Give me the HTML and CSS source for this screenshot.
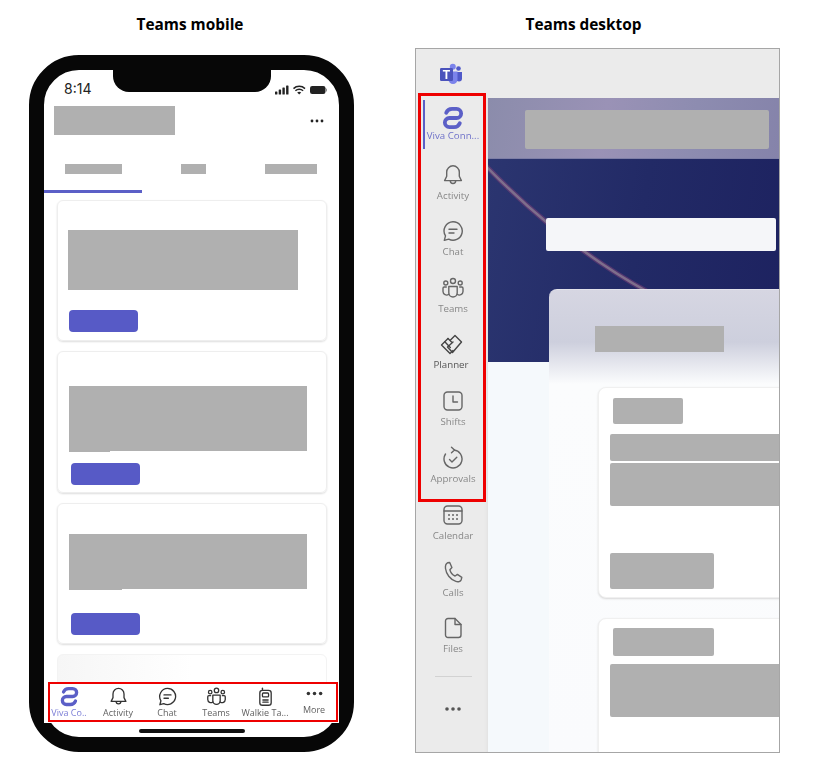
FILE: index.html
```html
<!DOCTYPE html>
<html lang="en">
<head>
    <meta charset="UTF-8">
    <meta name="viewport" content="width=device-width, initial-scale=1.0">
    <title>Teams mobile and Teams desktop</title>
    <link rel="stylesheet" href="styles.css">
</head>
<body>
<div class="page">

    <!-- Teams mobile -->
    <section class="col-mobile">
        <h2 class="col-title">Teams mobile</h2>
        <div class="phone">
            <div class="notch"></div>
            <div class="status-bar">
                <span class="time">8:14</span>
                <svg class="status-icons" width="52" height="10" viewBox="0 0 52 10">
                    <rect x="0" y="6.5" width="2.4" height="3" rx=".6"/>
                    <rect x="3.7" y="4.5" width="2.4" height="5" rx=".6"/>
                    <rect x="7.4" y="2.5" width="2.4" height="7" rx=".6"/>
                    <rect x="11.1" y=".5" width="2.4" height="9" rx=".6"/>
                    <path class="wifi" d="M18.5 3.6a8.4 8.4 0 0 1 11.5 0M20.4 5.7a5.6 5.6 0 0 1 7.7 0"/>
                    <path d="M24.2 9.6l-2-2a2.9 2.9 0 0 1 4 0z"/>
                    <rect x="35" y="1" width="15.5" height="8" rx="2.2"/>
                    <rect x="51" y="3.6" width="1" height="2.8" rx=".5" opacity=".5"/>
                </svg>
            </div>
            <div class="app-head">
                <div class="ph app-title"></div>
                <svg class="head-dots" width="14" height="4" viewBox="0 0 14 4">
                    <circle cx="2" cy="2" r="1.4"/><circle cx="7" cy="2" r="1.4"/><circle cx="12" cy="2" r="1.4"/>
                </svg>
            </div>
            <div class="tabs">
                <div class="ph tab-a"></div>
                <div class="ph tab-b"></div>
                <div class="ph tab-c"></div>
            </div>
            <div class="tab-line"></div>

            <div class="cards">
                <div class="card card-a">
                    <div class="ph"></div>
                    <div class="card-btn"></div>
                </div>
                <div class="card card-b">
                    <div class="ph"></div>
                    <div class="ph tail"></div>
                    <div class="card-btn"></div>
                </div>
                <div class="card card-c">
                    <div class="ph"></div>
                    <div class="ph tail"></div>
                    <div class="card-btn"></div>
                </div>
                <div class="card card-fade"></div>
            </div>

            <nav class="tabbar">
                <div class="tab-item active">
                    <svg class="icon-sm" viewBox="0 0 24 24"><use href="#i-viva"/></svg>
                    <span>Viva Co..</span>
                </div>
                <div class="tab-item">
                    <svg class="icon-sm" viewBox="0 0 24 24"><use href="#i-bell"/></svg>
                    <span>Activity</span>
                </div>
                <div class="tab-item">
                    <svg class="icon-sm" viewBox="0 0 24 24"><use href="#i-chat"/></svg>
                    <span>Chat</span>
                </div>
                <div class="tab-item">
                    <svg class="icon-sm" viewBox="0 0 24 24"><use href="#i-teams"/></svg>
                    <span>Teams</span>
                </div>
                <div class="tab-item">
                    <svg class="icon-sm" viewBox="0 0 24 24"><use href="#i-walkie"/></svg>
                    <span>Walkie Ta...</span>
                </div>
                <div class="tab-item more">
                    <svg class="icon-sm" viewBox="0 0 24 24"><use href="#i-dots"/></svg>
                    <span>More</span>
                </div>
            </nav>
            <div class="home-bar"></div>
            <div class="red-box red-mobile"></div>
        </div>
    </section>

    <!-- Teams desktop -->
    <section class="col-desktop">
        <h2 class="col-title">Teams desktop</h2>
        <div class="desktop">
            <header class="top-bar">
                <svg class="teams-logo" width="24" height="24" viewBox="0 0 24 24">
                    <circle cx="19.5" cy="6.5" r="2.3" fill="#5059c9"/>
                    <circle cx="13.8" cy="4.8" r="3" fill="#7b83eb"/>
                    <path d="M17 10h6v6.5a3 3 0 0 1-6 0z" fill="#5059c9"/>
                    <path d="M9.5 9.5h9v8a4.5 4.5 0 0 1-9 0z" fill="#7b83eb"/>
                    <rect x="1" y="6" width="13" height="13" rx="1.2" fill="#4b53bc"/>
                    <text x="7.5" y="16.5" class="logo-t">T</text>
                </svg>
            </header>
            <div class="desk-body">
                <aside class="rail">
                    <div class="rail-item active first">
                        <svg class="icon" viewBox="0 0 24 24"><use href="#i-viva"/></svg>
                        <span>Viva Conn...</span>
                    </div>
                    <div class="rail-item">
                        <svg class="icon" viewBox="0 0 24 24"><use href="#i-bell"/></svg>
                        <span>Activity</span>
                    </div>
                    <div class="rail-item">
                        <svg class="icon" viewBox="0 0 24 24"><use href="#i-chat"/></svg>
                        <span>Chat</span>
                    </div>
                    <div class="rail-item">
                        <svg class="icon" viewBox="0 0 24 24"><use href="#i-teams"/></svg>
                        <span>Teams</span>
                    </div>
                    <div class="rail-item planner">
                        <svg class="icon" viewBox="0 0 24 24"><use href="#i-planner"/></svg>
                        <span>Planner</span>
                    </div>
                    <div class="rail-item">
                        <svg class="icon" viewBox="0 0 24 24"><use href="#i-shifts"/></svg>
                        <span>Shifts</span>
                    </div>
                    <div class="rail-item">
                        <svg class="icon" viewBox="0 0 24 24"><use href="#i-approvals"/></svg>
                        <span>Approvals</span>
                    </div>
                    <div class="rail-item">
                        <svg class="icon" viewBox="0 0 24 24"><use href="#i-calendar"/></svg>
                        <span>Calendar</span>
                    </div>
                    <div class="rail-item">
                        <svg class="icon" viewBox="0 0 24 24"><use href="#i-calls"/></svg>
                        <span>Calls</span>
                    </div>
                    <div class="rail-item">
                        <svg class="icon" viewBox="0 0 24 24"><use href="#i-files"/></svg>
                        <span>Files</span>
                    </div>
                    <div class="rail-divider"></div>
                    <svg class="rail-dots" width="18" height="6" viewBox="0 0 18 6">
                        <circle cx="3" cy="3" r="1.8"/><circle cx="9" cy="3" r="1.8"/><circle cx="15" cy="3" r="1.8"/>
                    </svg>
                </aside>

                <main class="desk-main">
                    <div class="band">
                        <div class="ph band-title"></div>
                    </div>
                    <div class="hero">
                        <svg class="hero-line" width="291" height="203" viewBox="0 0 291 203">
                            <path class="streak-glow" d="M-6 3Q73 85 160 133"/>
                            <path class="streak-core" d="M-6 3Q73 85 160 133"/>
                        </svg>
                        <div class="hero-bar"></div>
                    </div>
                    <div class="panel">
                        <div class="ph panel-title"></div>
                        <div class="desk-card card-one">
                            <div class="ph dc-title"></div>
                            <div class="ph dc-line1"></div>
                            <div class="ph dc-line2"></div>
                            <div class="ph dc-btn"></div>
                        </div>
                        <div class="desk-card card-two">
                            <div class="ph dc-title"></div>
                            <div class="ph dc-line3"></div>
                        </div>
                    </div>
                </main>
            </div>
            <div class="red-box red-desktop"></div>
        </div>
    </section>
</div>

<!-- shared icons -->
<svg class="icon-defs" width="0" height="0">
    <defs>
        <g id="i-viva" class="viva-mark">
            <path d="M5.2 6.8C6.3 4.2 8.5 2.9 11 2.9H15.6A4.55 4.55 0 0 1 15.6 12H8.4A4.55 4.55 0 0 0 8.4 21.1H13C15.5 21.1 17.7 19.8 18.8 17.2"/>
        </g>
        <g id="i-bell">
            <path d="M12 2.8a6.3 6.3 0 0 0-6.3 6.3v4.2L3.6 17.6h16.8l-2.1-4.3V9.1A6.3 6.3 0 0 0 12 2.8z"/>
            <path d="M9.3 17.8a2.7 2.7 0 0 0 5.4 0"/>
        </g>
        <g id="i-chat">
            <path d="M12 2.8a9.2 9.2 0 1 1-4.3 17.3l-4.4 1.3 1.2-4.5A9.2 9.2 0 0 1 12 2.8z"/>
            <path d="M8 10.2h8M8 14h5"/>
        </g>
        <g id="i-teams">
            <circle cx="12" cy="5" r="2.5"/>
            <circle cx="4.8" cy="7" r="2"/>
            <circle cx="19.2" cy="7" r="2"/>
            <path d="M7.8 10.5h8.4v6.3a4.2 4.2 0 0 1-8.4 0z"/>
            <path d="M5.3 11H3.2a1.2 1.2 0 0 0-1.2 1.2v3.3a3.6 3.6 0 0 0 5.8 2.8"/>
            <path d="M18.7 11h2.1a1.2 1.2 0 0 1 1.2 1.2v3.3a3.6 3.6 0 0 1-5.8 2.8"/>
        </g>
        <g id="i-walkie">
            <path d="M8.5 5V2.5"/>
            <rect x="5.5" y="5" width="13" height="17" rx="3"/>
            <rect x="8.5" y="8" width="7" height="4.5" rx="1"/>
            <path d="M9 16h6M9 18.5h6"/>
        </g>
        <g id="i-dots" class="fill-mark">
            <circle cx="5" cy="12" r="2"/><circle cx="12" cy="12" r="2"/><circle cx="19" cy="12" r="2"/>
        </g>
        <g id="i-planner">
            <path d="M9 5.5L2.5 12 11 20.5l3-3"/>
            <path d="M9 5.5l3.5 3.5"/>
            <path d="M11.5 7L16 2.5 22.5 9 13.5 19.5 8.5 14l5.5-5"/>
            <path d="M5.8 8.8l5.5 5.7"/>
        </g>
        <g id="i-shifts">
            <rect x="3" y="3" width="18" height="18" rx="3.5"/>
            <path d="M12 7v6h4.5"/>
        </g>
        <g id="i-approvals">
            <path d="M13 4A9 9 0 1 1 4.5 8"/>
            <path d="M10.5 1.2l3 2.8-3 2.8"/>
            <path d="M8.5 13.5l2.5 2.5 4.8-4.8"/>
        </g>
        <g id="i-calendar">
            <rect x="3" y="3" width="18" height="18" rx="3.5"/>
            <path d="M3 8h18"/>
            <path class="cal-dots" d="M8 12h.01M12 12h.01M16 12h.01M8 16h.01M12 16h.01M16 16h.01"/>
        </g>
        <g id="i-calls">
            <path d="M6.5 2.8l2.2-.3 2.2 5-2 2.3c.6 2.6 2.7 5 5.2 6.2l2.3-1.6 4.4 3-.6 2.3c-.6 1.7-3 2.7-5.3 1.7C9 19.5 5.2 14 4.5 8.5c-.3-2.7.3-4.8 2-5.7z"/>
        </g>
        <g id="i-files">
            <path d="M7 2.5h7l6 6V19a2.5 2.5 0 0 1-2.5 2.5H7A2.5 2.5 0 0 1 4.5 19V5A2.5 2.5 0 0 1 7 2.5z"/>
            <path d="M14 2.5V8.5H20"/>
        </g>
    </defs>
</svg>
</body>
</html>
```

FILE: styles.css
```css
/* Page frame */
body {
    margin: 0;
    background: #fff;
    font-family: "Open Sans", "Liberation Sans", sans-serif;
}

.page {
    display: flex;
    gap: 61px;
    width: 813px;
    height: 766px;
    padding-left: 29px;
    box-sizing: border-box;
    overflow: hidden;
}

.col-mobile {
    width: 325px;
}

.col-desktop {
    width: 365px;
}

.col-title {
    margin: 15px 3px 20px 0;
    font-size: 15.4px;
    line-height: 20px;
    font-weight: 700;
    text-align: center;
    color: #000;
}

.col-desktop .col-title {
    margin: 15px 28px 13px 0;
}

/* Grey placeholder used everywhere content is blanked out */
.ph {
    background: #b0b0b0;
}

/* Red highlight around the navigation */
.red-box {
    position: absolute;
    box-sizing: border-box;
    border: 2px solid #ee0000;
    pointer-events: none;
}

.red-mobile {
    left: 4px;
    top: 612px;
    width: 290px;
    height: 40px;
}

.red-desktop {
    left: 2px;
    top: 44px;
    width: 68px;
    height: 409px;
    border-width: 3px;
}

/* Phone */
.phone {
    position: relative;
    display: flex;
    flex-direction: column;
    box-sizing: border-box;
    width: 325px;
    height: 697px;
    border: 15px solid #070707;
    border-radius: 50px;
    background: #fff;
}

.notch {
    position: absolute;
    top: -1px;
    left: 69px;
    width: 158px;
    height: 23px;
    background: #070707;
    border-radius: 0 0 16px 16px;
}

.status-bar {
    display: flex;
    justify-content: space-between;
    align-items: flex-start;
    height: 25px;
    padding: 11px 12px 0 20px;
}

.time {
    font-size: 14px;
    line-height: 16px;
    color: #222;
    font-family: "Inter", sans-serif;
}

.status-icons {
    fill: #222;
    margin-top: 4px;
}

.status-icons .wifi {
    fill: none;
    stroke: #222;
    stroke-width: 1.5;
}

.app-head {
    display: flex;
    justify-content: space-between;
    align-items: center;
    padding: 0 15px 0 10px;
}

.app-title {
    width: 121px;
    height: 29px;
}

.head-dots {
    fill: #222;
    margin-top: 1px;
}

.tabs {
    display: flex;
    justify-content: space-between;
    margin-top: 29px;
    padding: 0 22px 0 21px;
}

.tabs .ph {
    height: 10px;
}

.tab-a { width: 57px; }
.tab-b { width: 25px; }
.tab-c { width: 52px; }

.tab-line {
    width: 98px;
    height: 3px;
    margin-top: 16px;
    background: #5b5fc7;
}

/* Mobile cards */
.cards {
    flex: 1;
    min-height: 0;
    overflow: hidden;
    display: flex;
    flex-direction: column;
    gap: 10px;
    padding: 7px 12px 0 13px;
}

.card {
    flex: none;
    box-sizing: border-box;
    border: 1px solid #eeeeee;
    border-radius: 6px;
    box-shadow: 0 1px 2px #ddd;
}

.card .ph {
    margin-left: 10px;
}

.card-btn {
    width: 69px;
    height: 22px;
    background: #575ac6;
    border-radius: 4px;
}

.card-a {
    height: 141px;
    padding-top: 29px;
}

.card-a .ph {
    width: 230px;
    height: 60px;
}

.card-a .card-btn {
    margin: 20px 0 0 11px;
}

.card-b {
    height: 142px;
    padding-top: 34px;
}

.card-b .ph {
    margin-left: 11px;
    width: 238px;
    height: 65px;
}

.card-b .card-btn {
    margin: 11px 0 0 13px;
}

.card-c {
    height: 141px;
    padding-top: 30px;
}

.card-c .ph {
    margin-left: 11px;
    width: 238px;
    height: 55px;
}

.card-c .card-btn {
    margin: 23px 0 0 13px;
}

.card .tail {
    height: 1px;
}

.card-b .tail {
    width: 41px;
}

.card-c .tail {
    width: 53px;
}

.card-fade {
    height: 60px;
    background: linear-gradient(90deg, #f6f6f6, #fff 50%);
    border-color: #f3f3f3;
    box-shadow: none;
}

/* Mobile tab bar */
.tabbar {
    display: flex;
    flex: none;
    height: 40px;
    padding-left: .5px;
    background: #fff;
}

.tab-item {
    display: flex;
    flex-direction: column;
    align-items: center;
    width: 49px;
    padding-top: 3px;
    font-size: 9px;
    line-height: 12px;
    color: #616161;
    white-space: nowrap;
}

.tab-item.active {
    color: #7a7dd6;
}

.tab-item.more {
    padding-top: 0;
}

.icon-sm {
    width: 21px;
    height: 21px;
    flex: none;
    fill: none;
    stroke: #333;
    stroke-width: 1.5;
    stroke-linecap: round;
    stroke-linejoin: round;
    filter: blur(.25px);
}

.tab-item.active .icon-sm,
.rail-item.active .icon {
    stroke: #5b5fc7;
}

.tab-item span,
.rail-item span {
    filter: blur(.3px);
}

.home-bar {
    flex: none;
    width: 106px;
    height: 4px;
    margin: 6px auto 4px;
    background: #111;
    border-radius: 2px;
}

/* Desktop window */
.desktop {
    position: relative;
    box-sizing: border-box;
    width: 365px;
    height: 705px;
    border: 1px solid #a6a6a6;
    background: #ebebeb;
    overflow: hidden;
}

.top-bar {
    height: 49px;
    padding: 13px 0 0 23px;
    box-sizing: border-box;
}

.teams-logo {
    display: block;
    filter: blur(.3px);
}

.logo-t {
    fill: #fff;
    font-family: "Liberation Sans", sans-serif;
    font-size: 12px;
    font-weight: 700;
    text-anchor: middle;
}

.desk-body {
    display: flex;
    height: 654px;
}

/* Left rail */
.rail {
    flex: none;
    width: 72px;
    box-sizing: border-box;
    padding: 8px 0 0 2px;
    display: flex;
    flex-direction: column;
    align-items: center;
    box-shadow: inset -3px 0 3px -2px #e0e0e0;
}

.rail-item {
    position: relative;
    flex: none;
    display: flex;
    flex-direction: column;
    align-items: center;
    width: 70px;
    height: 56.7px;
    font-size: 9.7px;
    line-height: 12px;
    color: #888;
    white-space: nowrap;
}

.rail-item span {
    margin-top: 3px;
}

.rail-item.first span {
    margin-top: 0;
}

.rail-item.active {
    color: #6f72c9;
}

/* Purple marker next to the selected item */
.rail-item.active::before {
    content: "";
    position: absolute;
    left: 5px;
    top: -6px;
    width: 2px;
    height: 49px;
    background: #5b5fc7;
}

.rail-item.planner {
    color: #555;
    left: -2px;
}

.rail-item.planner span {
    margin-top: 2px;
}

.icon {
    width: 24px;
    height: 24px;
    flex: none;
    fill: none;
    stroke: #666;
    stroke-width: 1.4;
    stroke-linecap: round;
    stroke-linejoin: round;
    filter: blur(.25px);
}

.planner .icon {
    stroke: #444;
}

.rail-divider {
    width: 37px;
    height: 1px;
    margin-top: 3px;
    background: #d2d2d2;
}

.rail-dots {
    margin-top: 29px;
    fill: #555;
}

/* Shared icon parts */
.icon-defs {
    position: absolute;
}

.viva-mark {
    stroke-width: 3.8;
}

.fill-mark {
    fill: #333;
    stroke: none;
}

.cal-dots {
    stroke-width: 2;
}

/* Desktop content */
.desk-main {
    flex: 1;
    min-width: 0;
    background: #f5f9fc;
    overflow: hidden;
}

.band {
    box-sizing: border-box;
    height: 61px;
    padding: 12px 10px 0 37px;
    background: linear-gradient(100deg, #8b8cab, #9a92b6 40%, #8d8cb0 70%, #8583aa);
    border-bottom: 1px solid #7d7ea6;
}

.band-title {
    height: 39px;
    border-radius: 2px;
}

.hero {
    position: relative;
    box-sizing: border-box;
    height: 203px;
    padding: 59px 0 0 58px;
    background: linear-gradient(100deg, #2b3570, #222a66 50%, #1d2260);
}

.hero-line {
    position: absolute;
    left: 0;
    top: 0;
    fill: none;
    filter: blur(.5px);
}

.streak-glow {
    stroke: #7a3f78;
    stroke-width: 5;
    opacity: .55;
}

.streak-core {
    stroke: #84748f;
    stroke-width: 2.5;
    opacity: .9;
}

.hero-bar {
    position: relative;
    width: 230px;
    height: 33px;
    background: #f5f6f9;
    border-radius: 2px;
}

.panel {
    position: relative;
    height: 463px;
    margin: -73px 0 0 61px;
    padding: 36px 0 0 46px;
    box-sizing: border-box;
    border-radius: 8px 0 0 0;
    border-top: 1px solid #e2e2ea;
    background: linear-gradient(#d6d6e2, #cdcfdd 52px, #fbfcfd 94px, #fafbfd);
    overflow: hidden;
}

.panel-title {
    width: 129px;
    height: 26px;
}

.desk-card {
    box-sizing: border-box;
    width: 260px;
    margin-left: 3px;
    background: #fff;
    border: 1px solid #f0f0f0;
    border-radius: 8px;
    box-shadow: 0 1px 2px #d8d8d8;
}

.desk-card .ph {
    border-radius: 2px;
    margin-left: 11px;
}

.card-one {
    height: 211px;
    margin-top: 35px;
    padding-top: 10px;
}

.card-two {
    height: 200px;
    margin-top: 20px;
    padding-top: 9px;
}

.desk-card .dc-title {
    margin-left: 14px;
    width: 70px;
    height: 26px;
}

.card-two .dc-title {
    width: 101px;
    height: 28px;
}

.dc-line1 {
    height: 27px;
    margin-top: 10px;
}

.dc-line2 {
    height: 43px;
    margin-top: 2px;
}

.dc-btn {
    width: 104px;
    height: 36px;
    margin-top: 47px;
}

.dc-line3 {
    height: 53px;
    margin-top: 8px;
}
```
